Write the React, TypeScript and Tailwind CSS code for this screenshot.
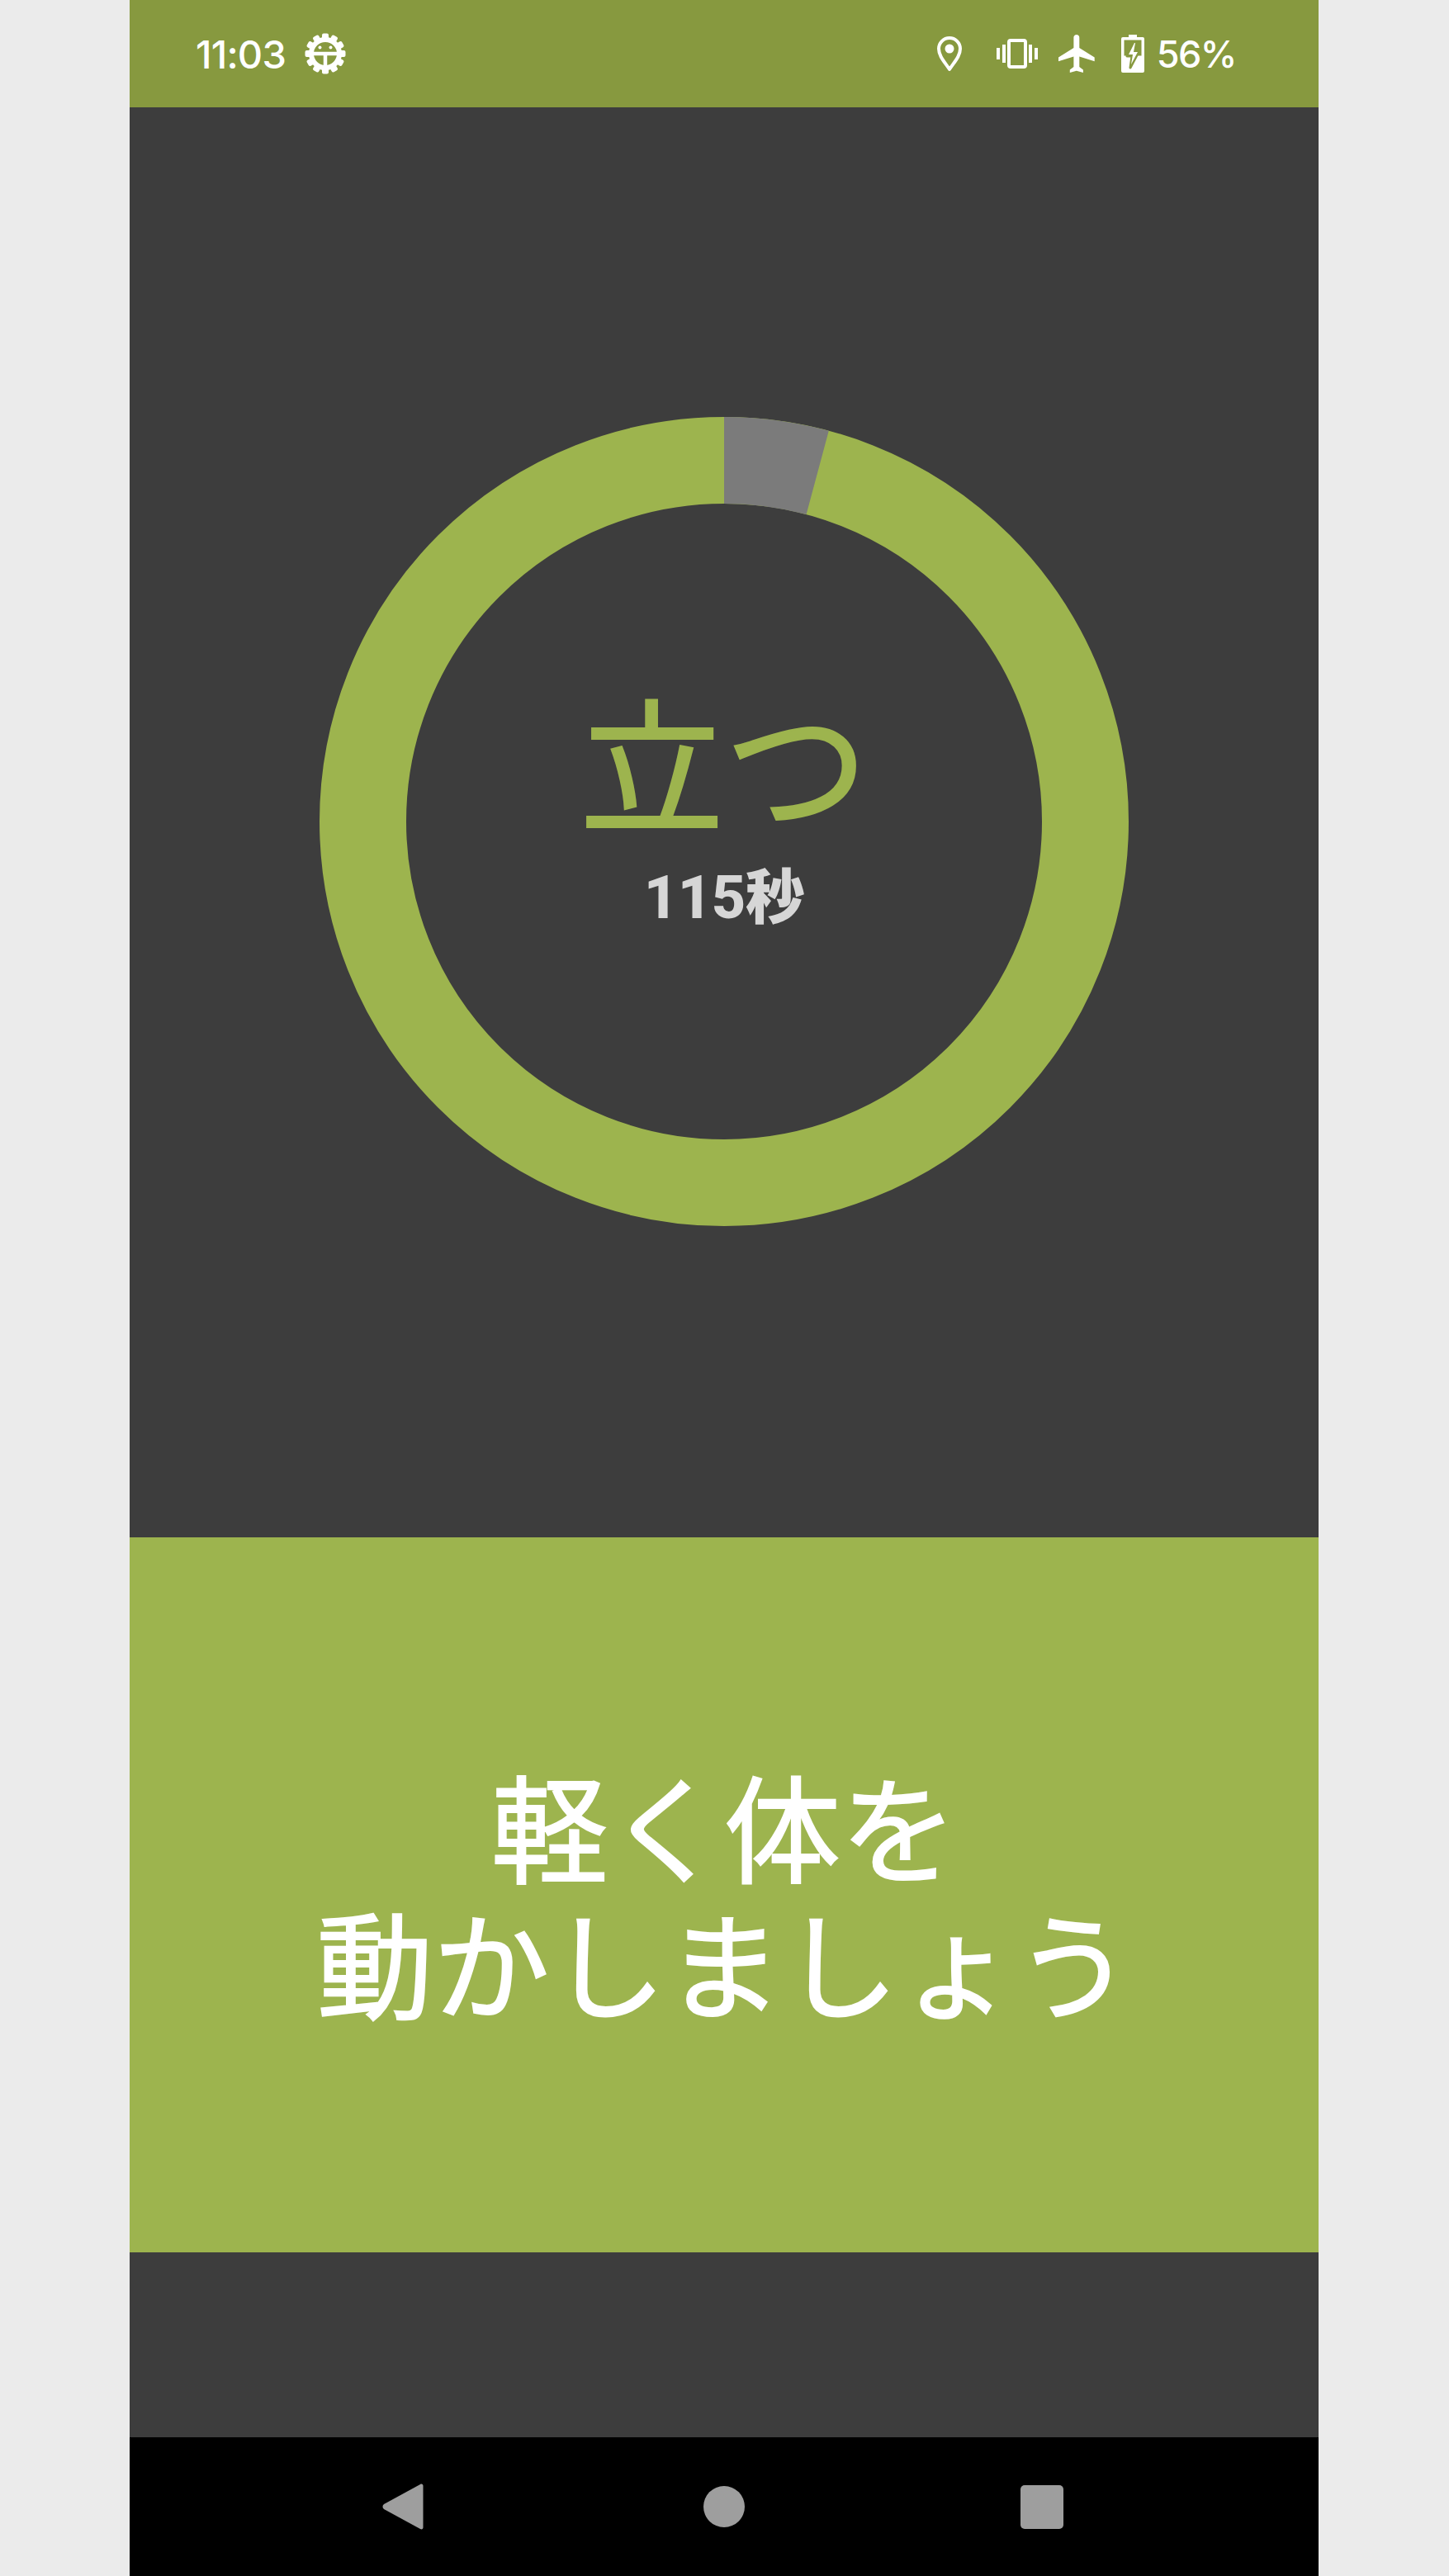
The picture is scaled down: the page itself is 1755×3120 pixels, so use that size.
const cjk = "font-['Noto_Sans_CJK_JP','Noto_Sans_CJK_SC',sans-serif]"

function GearIcon() {
  const teeth = Array.from({ length: 12 }, (_, i) => i * 30)
  return (
    <svg className="w-[50px] h-[50px]" viewBox="0 0 50 50" fill="none">
      {teeth.map((deg) => (
        <rect key={deg} x="21" y="0.5" width="8" height="8" rx="2" fill="#fff" transform={`rotate(${deg} 25 25)`} />
      ))}
      <circle cx="25" cy="25" r="17" stroke="#fff" strokeWidth="6" />
      <path d="M8 25h34M25 25v16" stroke="#fff" strokeWidth="4.5" />
      <circle cx="18.5" cy="17.5" r="2" fill="#fff" />
      <circle cx="31.5" cy="17.5" r="2" fill="#fff" />
    </svg>
  )
}

function LocationIcon() {
  return (
    <svg className="w-[32px] h-[46px]" viewBox="0 0 32 46" fill="none">
      <path d="M16 42C10 33 3 26 3 17a13 13 0 0 1 26 0c0 9-7 16-13 25z" stroke="#fff" strokeWidth="4" strokeLinejoin="round" />
      <circle cx="16" cy="17" r="5.500" fill="#fff" />
    </svg>
  )
}

function VibrateIcon() {
  return (
    <svg className="w-[50px] h-[36px]" viewBox="0 0 50 36" fill="none">
      <rect x="15" y="2" width="20" height="32" rx="2" stroke="#fff" strokeWidth="4" />
      <path d="M2 11v14M9 7v22M41 7v22M48 11v14" stroke="#fff" strokeWidth="4" />
    </svg>
  )
}

function PlaneIcon() {
  return (
    <svg className="w-[46px] h-[46px]" viewBox="2 2 20 20" fill="#fff">
      <path d="M21 16v-2l-8-5V3.500c0-.83-.67-1.500-1.500-1.500S10 2.670 10 3.500V9l-8 5v2l8-2.500V19l-2 1.500V22l3.500-1 3.500 1v-1.500L13 19v-5.500l8 2.500z" />
    </svg>
  )
}

function BatteryIcon() {
  return (
    <svg className="w-[28px] h-[46px]" viewBox="0 0 28 46" fill="none">
      <path d="M9 0h10v3h7a2 2 0 0 1 2 2v39a2 2 0 0 1-2 2H2a2 2 0 0 1-2-2V5a2 2 0 0 1 2-2h7z" fill="#fff" />
      <rect x="3.500" y="6.500" width="21" height="19" fill="#87993f" />
      <path d="M16 9l-9 17h6l-2 14 10-19h-6l3-12z" fill="#87993f" stroke="#87993f" strokeWidth="3" strokeLinejoin="round" />
      <path d="M16 10l-7 14h5l-2 12 8-15h-5l2-11z" fill="#fff" />
    </svg>
  )
}

function TimerRing() {
  // 外径490 / 内径385，灰色部分为前15度
  return (
    <svg className="w-[980px] h-[980px]" viewBox="0 0 980 980">
      <circle cx="490" cy="490" r="437.5" fill="none" stroke="#9db44e" strokeWidth="105" />
      <path d="M490 0A490 490 0 0 1 616.8 16.700L589.6 118.100A385 385 0 0 0 490 105Z" fill="#7b7b7b" />
    </svg>
  )
}

export default function App() {
  return (
    <div className="w-full h-[3120px] pl-[157px] bg-[#ebebeb] overflow-hidden">
      <div className="flex flex-col w-[1440px] h-[3120px]">
        <div className="flex items-center justify-between h-[130px] pl-[80px] pr-[100px] bg-[#87993f] text-white font-['Inter',sans-serif]">
          <div className="flex items-center gap-[23px]">
            <span className="text-[47px] leading-none font-medium tracking-[-0.8px]">11:03</span>
            <GearIcon />
          </div>
          <div className="flex items-center">
            <LocationIcon />
            <div className="ml-[41px]"><VibrateIcon /></div>
            <div className="ml-[25px]"><PlaneIcon /></div>
            <div className="ml-[30px]"><BatteryIcon /></div>
            <span className="ml-[15px] text-[45px] leading-none font-medium tracking-[-1.5px]">56%</span>
          </div>
        </div>

        <div className="flex justify-center h-[1732px] pt-[375px] bg-[#3d3d3d]">
          <div className="relative w-[980px] h-[980px]">
            <TimerRing />
            <div className="absolute inset-0 flex flex-col items-center">
              <div className={`mt-[316px] text-[175px] leading-[195px] font-normal [-webkit-text-stroke-width:2px] text-[#9db44e] ${cjk}`}>立つ</div>
              <div className="mt-[30px] text-[72px] leading-[84px] tracking-[-0.5px] font-extrabold text-[#d6d6d6] font-['Roboto','Noto_Sans_CJK_JP',sans-serif]">115秒</div>
            </div>
          </div>
        </div>

        <div className={`flex items-center justify-center h-[866px] pb-[8px] bg-[#9db44e] text-white text-center text-[141px] leading-[165px] font-normal [-webkit-text-stroke-width:2px] ${cjk}`}>
          <div>
            軽く体を
            <br />
            動かしましょう
          </div>
        </div>

        <div className="h-[224px] bg-[#3d3d3d]" />

        <div className="flex items-center h-[168px] pl-[306px] bg-black">
          <svg className="w-[50px] h-[56px]" viewBox="0 0 50 56" fill="#9e9e9e">
            <path d="M46 1c2-1 3.500 0 3.500 2v50c0 2-1.500 3-3.500 2L2 31c-2-1.500-2-4.500 0-6z" />
          </svg>
          <div className="ml-[339px] w-[50px] h-[50px] rounded-full bg-[#9e9e9e]" />
          <div className="ml-[334px] w-[52px] h-[53px] rounded-[5px] bg-[#9e9e9e]" />
        </div>
      </div>
    </div>
  )
}
